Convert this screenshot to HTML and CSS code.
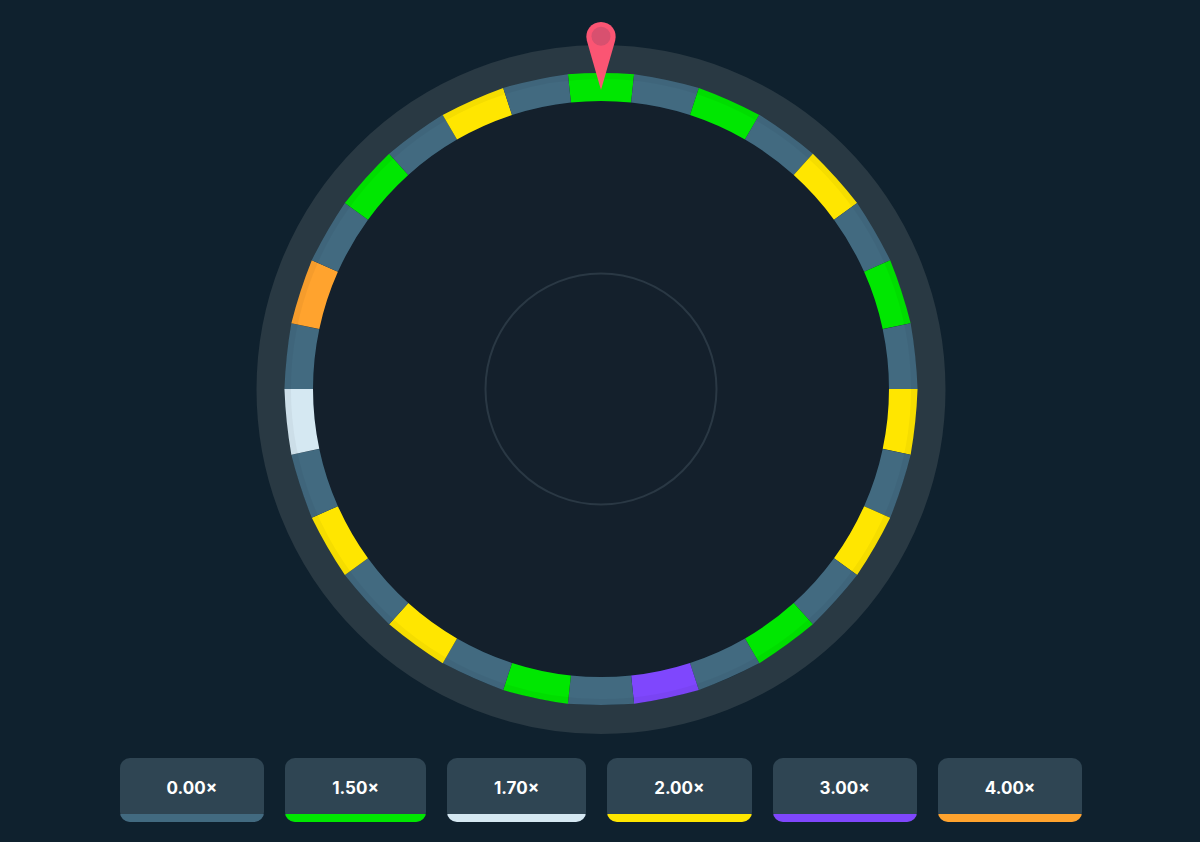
FILE: index.html

```html
<!DOCTYPE html>
<html>
<head>
  <title>Wheel</title>
  <link rel="stylesheet" href="styles.css">
</head>
<body>
  <div class="game">
    <svg class="wheel" width="690" height="714" viewBox="-345 -369 690 714">
      <defs>
        <path id="seg" d="M-33.1 -314.8 A480 480 0 0 1 33.1 -314.8 L30.1 -286.42 A288 288 0 0 0 -30.1 -286.42 Z"/>
      </defs>

      <circle class="rim" cy="0.5" r="330"/>
      <circle class="inner" r="288"/>
      <circle class="hub" r="115.5"/>

      <!-- 30 pieces, 12deg each, clockwise from the top -->
      <use href="#seg" class="green"/>
      <use href="#seg" class="grey" transform="rotate(12)"/>
      <use href="#seg" class="green" transform="rotate(24)"/>
      <use href="#seg" class="grey" transform="rotate(36)"/>
      <use href="#seg" class="yellow" transform="rotate(48)"/>
      <use href="#seg" class="grey" transform="rotate(60)"/>
      <use href="#seg" class="green" transform="rotate(72)"/>
      <use href="#seg" class="grey" transform="rotate(84)"/>
      <use href="#seg" class="yellow" transform="rotate(96)"/>
      <use href="#seg" class="grey" transform="rotate(108)"/>
      <use href="#seg" class="yellow" transform="rotate(120)"/>
      <use href="#seg" class="grey" transform="rotate(132)"/>
      <use href="#seg" class="green" transform="rotate(144)"/>
      <use href="#seg" class="grey" transform="rotate(156)"/>
      <use href="#seg" class="purple" transform="rotate(168)"/>
      <use href="#seg" class="grey" transform="rotate(180)"/>
      <use href="#seg" class="green" transform="rotate(192)"/>
      <use href="#seg" class="grey" transform="rotate(204)"/>
      <use href="#seg" class="yellow" transform="rotate(216)"/>
      <use href="#seg" class="grey" transform="rotate(228)"/>
      <use href="#seg" class="yellow" transform="rotate(240)"/>
      <use href="#seg" class="grey" transform="rotate(252)"/>
      <use href="#seg" class="white" transform="rotate(264)"/>
      <use href="#seg" class="grey" transform="rotate(276)"/>
      <use href="#seg" class="orange" transform="rotate(288)"/>
      <use href="#seg" class="grey" transform="rotate(300)"/>
      <use href="#seg" class="green" transform="rotate(312)"/>
      <use href="#seg" class="grey" transform="rotate(324)"/>
      <use href="#seg" class="yellow" transform="rotate(336)"/>
      <use href="#seg" class="grey" transform="rotate(348)"/>

      <circle class="shade" r="313"/>

      <!-- pointer -->
      <path class="pin" d="M0 -299 L-14.13 -348.25 A14.7 14.7 0 1 1 14.13 -348.25 Z"/>
      <circle class="pin-dot" cy="-352.7" r="9.5"/>
    </svg>

    <div class="chips">
      <div class="chip"><span class="chip-label">0.00×</span><div class="chip-bar bar-grey"></div></div>
      <div class="chip"><span class="chip-label">1.50×</span><div class="chip-bar bar-green"></div></div>
      <div class="chip"><span class="chip-label">1.70×</span><div class="chip-bar bar-white"></div></div>
      <div class="chip"><span class="chip-label">2.00×</span><div class="chip-bar bar-yellow"></div></div>
      <div class="chip"><span class="chip-label">3.00×</span><div class="chip-bar bar-purple"></div></div>
      <div class="chip"><span class="chip-label">4.00×</span><div class="chip-bar bar-orange"></div></div>
    </div>
  </div>
</body>
</html>
```

FILE: styles.css

```css
body {
  margin: 0;
  background-color: #0f212e;
  font-family: Inter, "Liberation Sans", sans-serif;
}
.game {
  display: flex;
  flex-direction: column;
  align-items: center;
  padding: 20px 0 0 2px;
  gap: 24px;
}
.wheel {
  display: block;
}
.rim {
  fill: none;
  stroke: #293943;
  stroke-width: 29;
}
.inner {
  fill: #14202c;
}
.hub {
  fill: none;
  stroke: #2a3844;
  stroke-width: 2;
}
.shade {
  fill: none;
  stroke: rgba(0, 0, 0, 0.04);
  stroke-width: 6;
}
.grey { fill: #426a80; }
.green { fill: #00e701; }
.yellow { fill: #ffe600; }
.purple { fill: #7f47fd; }
.white { fill: #d5e8f2; }
.orange { fill: #ffa32e; }
.pin {
  fill: #fb5573;
}
.pin-dot {
  fill: #d8506f;
}
.chips {
  display: flex;
  gap: 21px;
}
.chip {
  display: flex;
  flex-direction: column;
  height: 64px;
  background-color: #2f4553;
  border-radius: 10px;
  overflow: hidden;
}
.chip-label {
  flex: 1;
  display: flex;
  align-items: center;
  justify-content: center;
  padding: 4px 47px 0;
  color: #fff;
  font-size: 17px;
  font-weight: 700;
}
.chip-bar {
  height: 8px;
}
.bar-grey { background-color: #426a80; }
.bar-green { background-color: #00e701; }
.bar-white { background-color: #d5e8f2; }
.bar-yellow { background-color: #ffe600; }
.bar-purple { background-color: #7f47fd; }
.bar-orange { background-color: #ffa32e; }
```
